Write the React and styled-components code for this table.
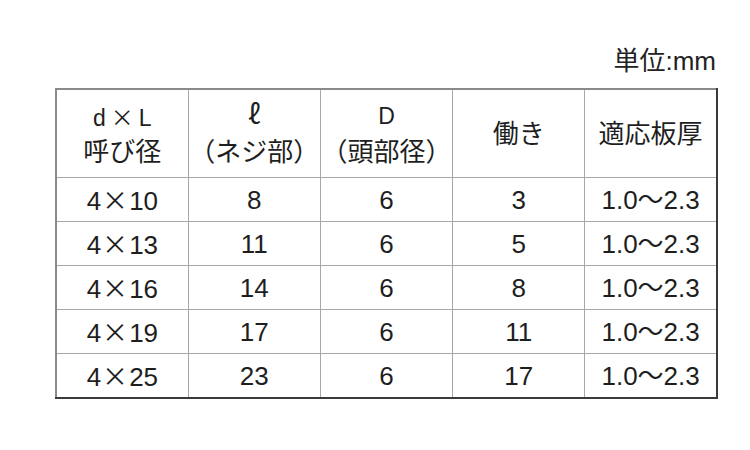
import React from "react";
import styled, {createGlobalStyle} from "styled-components";

const GlobalStyle = createGlobalStyle`
  body {
    margin: 0;
    background: #ffffff;
    font-family: "Liberation Sans", "Noto Sans CJK JP", sans-serif;
    color: #1e1e1e;
  }
`;

const rows = [
    {size: "10", thread: "8", head: "6", work: "3", plate: "1.0〜2.3"},
    {size: "13", thread: "11", head: "6", work: "5", plate: "1.0〜2.3"},
    {size: "16", thread: "14", head: "6", work: "8", plate: "1.0〜2.3"},
    {size: "19", thread: "17", head: "6", work: "11", plate: "1.0〜2.3"},
    {size: "25", thread: "23", head: "6", work: "17", plate: "1.0〜2.3"},
];

function App() {
    return (
        <Page>
            <GlobalStyle/>
            <Unit>単位:mm</Unit>
            <Table>
                <thead>
                <tr>
                    <Head>
                        <Line latin>d<Cross wide>×</Cross>L</Line>
                        <Line>呼び径</Line>
                    </Head>
                    <Head>
                        <Line latin><Script>ℓ</Script></Line>
                        <Line>（ネジ部）</Line>
                    </Head>
                    <Head>
                        <Line latin>D</Line>
                        <Line>（頭部径）</Line>
                    </Head>
                    <Head>働き</Head>
                    <Head>適応板厚</Head>
                </tr>
                </thead>
                <tbody>
                {rows.map((r) =>
                    <tr key={r.size}>
                        <Cell>4<Cross>×</Cross>{r.size}</Cell>
                        <Cell>{r.thread}</Cell>
                        <Cell>{r.head}</Cell>
                        <Cell>{r.work}</Cell>
                        <Cell>{r.plate}</Cell>
                    </tr>
                )}
                </tbody>
            </Table>
        </Page>
    );
}

export default App;

const Page = styled.div`
  width: 663px;
  padding: 46px 0 0 55px;
`;

const Unit = styled.div`
  text-align: right;
  font-size: 26px;
  line-height: 30px;
  height: 30px;
  margin-bottom: 12px;
  padding-right: 2px;
  color: #222;
`;

const Table = styled.table`
  width: 663px;
  table-layout: fixed;
  border-collapse: collapse;
  border-top: 2px solid #8a8a8a;
  border-left: 2px solid #8a8a8a;
  border-right: 2px solid #3a3a3a;
  border-bottom: 2px solid #3a3a3a;
`;

const Head = styled.th`
  height: 87px;
  padding: 0;
  border: 1px solid #a8a8a8;
  font-weight: normal;
  font-size: 26px;
  line-height: 36px;
  text-align: center;
  vertical-align: middle;
  white-space: nowrap;
`;

const Line = styled.div`
  height: 36px;
  line-height: 36px;
  font-size: ${p => p.latin ? "23px" : "26px"};
`;

const Script = styled.span`
  font-family: "Noto Sans CJK JP", sans-serif;
  font-size: 27px;
  line-height: 1;
`;

const Cross = styled.span`
  font-family: "Noto Sans CJK JP", sans-serif;
  padding: ${p => p.wide ? "0 5px" : "0 1px"};
`;

const Cell = styled.td`
  height: 43px;
  padding: 0;
  border: 1px solid #a8a8a8;
  font-size: 26px;
  line-height: 30px;
  text-align: center;
  vertical-align: middle;
  white-space: nowrap;
`;
